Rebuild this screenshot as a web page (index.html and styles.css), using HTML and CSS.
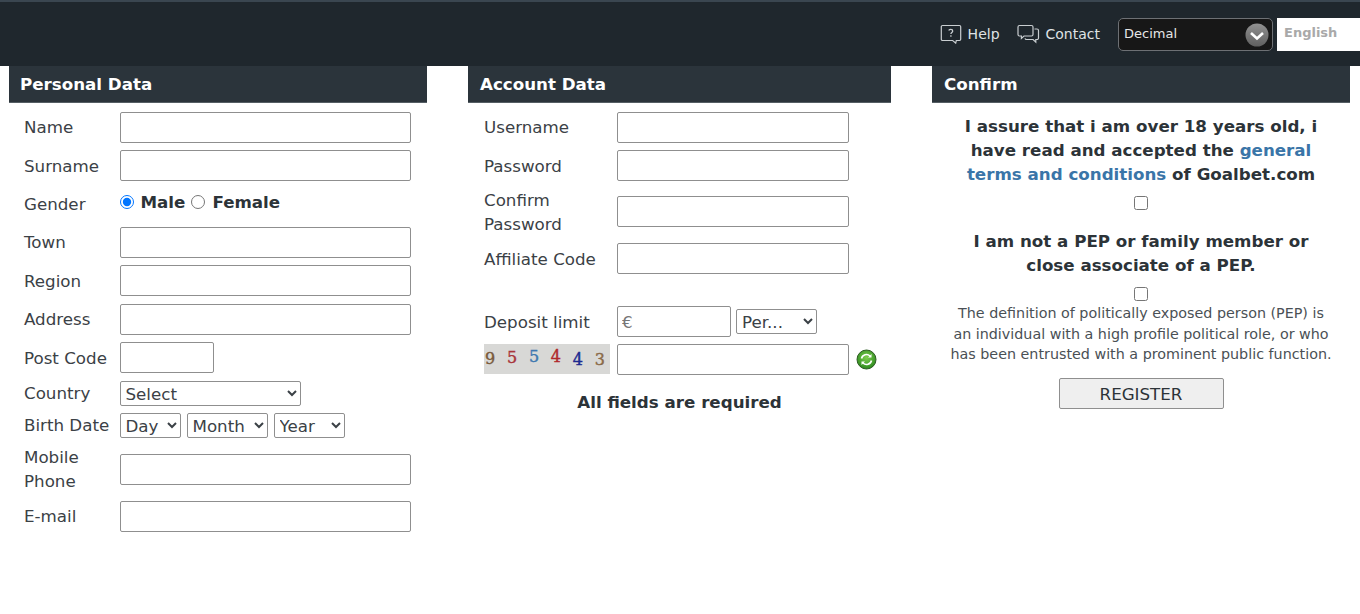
FILE: index.html
```html
<!DOCTYPE html>
<html lang="en">
<head>
<meta charset="utf-8">
<title>Register</title>
<link rel="stylesheet" href="styles.css">
</head>
<body>
<header class="topbar">
  <a class="toplink"><svg class="ico" width="22" height="20" viewBox="0 0 22 20"><path d="M2.5 1.5h17a1.2 1.2 0 0 1 1.2 1.2v12.6a1.2 1.2 0 0 1-1.2 1.2h-3.2l-.6 2.6-3-2.6H2.5a1.2 1.2 0 0 1-1.2-1.2V2.700a1.200 1.200 0 0 1 1.200-1.200z" fill="none" stroke="#c9ced1" stroke-width="1.2"/><path d="M8.800 6.500c.3-1.400 3.900-1.500 3.900.5 0 1.400-1.800 1.400-1.800 2.900M10.900 11.300v1.400" fill="none" stroke="#c9ced1" stroke-width="1.300"/></svg><span>Help</span></a>
  <a class="toplink contact"><svg class="ico" width="23" height="20" viewBox="0 0 23 20"><path d="M2.500 1.500h12a1.500 1.500 0 0 1 1.500 1.500v7.500a1.500 1.500 0 0 1-1.500 1.500H7l-2.600 2.400V12H2.500A1.500 1.500 0 0 1 1 10.500V3a1.500 1.500 0 0 1 1.500-1.500z" fill="none" stroke="#c9ced1" stroke-width="1.200"/><path d="M17.500 5h2.500a1.500 1.500 0 0 1 1.500 1.500V14a1.500 1.500 0 0 1-1.500 1.500h-1.200v2.600l-2.700-2.600H9.500a1.500 1.500 0 0 1-1.500-1.200" fill="none" stroke="#c9ced1" stroke-width="1.200"/></svg><span>Contact</span></a>
  <div class="odds">
    <span class="odds-text">Decimal</span>
    <svg class="odds-arrow" width="24" height="24" viewBox="0 0 24 24"><defs><linearGradient id="g" x1="0" y1="0" x2="0" y2="1"><stop offset="0" stop-color="#919191"/><stop offset="1" stop-color="#5f5f5f"/></linearGradient></defs><circle cx="12" cy="12" r="11.500" fill="url(#g)"/><path d="M6 10l6 5.500 6-5.500" fill="none" stroke="#fff" stroke-width="2.600"/></svg>
  </div>
  <div class="lang">English</div>
</header>

<main class="columns">
  <section class="panel panel-personal">
    <h2 class="panel-title">Personal Data</h2>
    <div class="rows">
      <div class="row"><label class="lbl">Name</label><input class="field" type="text"></div>
      <div class="row"><label class="lbl">Surname</label><input class="field" type="text"></div>
      <div class="row"><label class="lbl">Gender</label>
        <div class="gender"><input class="radio" type="radio" name="g" checked><b>Male</b><input class="radio radio-2" type="radio" name="g"><b>Female</b></div>
      </div>
      <div class="row"><label class="lbl">Town</label><input class="field" type="text"></div>
      <div class="row"><label class="lbl">Region</label><input class="field" type="text"></div>
      <div class="row"><label class="lbl">Address</label><input class="field" type="text"></div>
      <div class="row"><label class="lbl">Post Code</label><input class="field field-post" type="text"></div>
      <div class="row row-country"><label class="lbl">Country</label><select class="sel sel-country"><option>Select</option></select></div>
      <div class="row row-birth"><label class="lbl">Birth Date</label>
        <div class="dates">
          <select class="sel sel-day"><option>Day</option></select>
          <select class="sel sel-month"><option>Month</option></select>
          <select class="sel sel-year"><option>Year</option></select>
        </div>
      </div>
      <div class="row row-mobile"><label class="lbl">Mobile Phone</label><input class="field" type="text"></div>
      <div class="row row-email"><label class="lbl">E-mail</label><input class="field" type="text"></div>
    </div>
  </section>

  <section class="panel panel-account">
    <h2 class="panel-title">Account Data</h2>
    <div class="rows">
      <div class="row"><label class="lbl">Username</label><input class="field" type="text"></div>
      <div class="row"><label class="lbl">Password</label><input class="field" type="text"></div>
      <div class="row row-confirm"><label class="lbl">Confirm Password</label><input class="field" type="text"></div>
      <div class="row row-affiliate"><label class="lbl">Affiliate Code</label><input class="field" type="text"></div>
      <div class="row row-deposit"><label class="lbl">Deposit limit</label>
        <div class="deposit"><input class="field field-euro" type="text" placeholder="€"><select class="sel sel-per"><option>Per...</option></select></div>
      </div>
      <div class="row row-captcha">
        <div class="captcha"><span class="d1">9</span><span class="d2">5</span><span class="d3">5</span><span class="d4">4</span><span class="d5">4</span><span class="d6">3</span></div>
        <input class="field" type="text">
        <svg class="refresh" width="21" height="21" viewBox="0 0 21 21"><defs><radialGradient id="r" cx=".5" cy=".4" r=".6"><stop offset="0" stop-color="#7fce4e"/><stop offset="1" stop-color="#2c8a1e"/></radialGradient></defs><circle cx="10.500" cy="10.500" r="9.500" fill="url(#r)" stroke="#2d5a22"/><path d="M5.500 9.500a5 5 0 0 1 8.500-2.500M15.500 11.500a5 5 0 0 1-8.500 2.500" fill="none" stroke="#fff" stroke-width="1.600"/><path d="M15.500 5v3.500H12zM5.500 16v-3.500H9z" fill="#fff"/></svg>
      </div>
    </div>
    <p class="required">All fields are required</p>
  </section>

  <section class="panel panel-confirm">
    <h2 class="panel-title">Confirm</h2>
    <p class="assure">I assure that i am over 18 years old, i have read and accepted the <a class="terms">general terms and conditions</a> of Goalbet.com</p>
    <input class="check" type="checkbox">
    <p class="assure assure-pep">I am not a PEP or family member or close associate of a PEP.</p>
    <input class="check check-pep" type="checkbox">
    <p class="definition">The definition of politically exposed person (PEP) is an individual with a high profile political role, or who has been entrusted with a prominent public function.</p>
    <button class="register" type="button">REGISTER</button>
  </section>
</main>
</body>
</html>
```
FILE: styles.css
```css
* { box-sizing: border-box; }
html, body { margin: 0; height: 614px; overflow: hidden; }
body { background: #fff; font-family: "DejaVu Sans", Verdana, sans-serif; font-size: 16.700px; color: #343a3f; }

.topbar {
  height: 66px;
  background: #1f272d;
  border-top: 2px solid #3a4650;
  display: flex;
  align-items: center;
  justify-content: flex-end;
  color: #dfe2e4;
  font-size: 14px;
}
.toplink { display: flex; align-items: center; gap: 6px; }
.contact { margin-left: 17px; }
.ico { flex: none; }
.odds {
  width: 155px;
  height: 33px;
  margin-left: 18px;
  padding: 0 3px 0 5px;
  background: #171717;
  border: 1px solid #6d7074;
  border-radius: 5px;
  display: flex;
  align-items: center;
  justify-content: space-between;
  font-size: 13px;
  color: #e6e6e6;
}
.odds-text { margin-top: -2px; }
.odds-arrow { margin-top: 2px; }
.lang {
  width: 83px;
  height: 33px;
  margin-left: 4px;
  padding: 0 0 3px 7px;
  background: #fff;
  display: flex;
  align-items: center;
  font-size: 13px;
  font-weight: bold;
  color: #a9a9a9;
}

.columns { display: flex; padding-left: 9px; gap: 41px; }
.panel { flex: none; }
.panel-personal { width: 418px; }
.panel-account { width: 423px; }
.panel-confirm { width: 418px; text-align: center; }
.panel-title {
  margin: 0;
  height: 37px;
  padding: 0 12px;
  background: #2b343b;
  border-bottom: 1px solid #555e64;
  color: #fff;
  font-size: 16.700px;
  font-weight: bold;
  line-height: 36px;
  text-align: left;
}
.panel-personal .panel-title { padding-left: 11px; }

.rows { padding: 5px 0 0 15px; }
.panel-account .rows { padding-left: 16px; }
.row { height: 38.400px; display: flex; align-items: center; }
.row-country { height: 33px; }
.row-birth { height: 31px; }
.row-mobile { height: 57px; }
.row-email { height: 37px; }
.row-confirm { height: 54px; }
.row-affiliate { height: 40px; }
.row-deposit { height: 44px; margin-top: 21px; }
.row-captcha { height: 32px; }

.lbl { width: 95.500px; flex: none; line-height: 24px; color: #3b4146; }
.panel-account .lbl { width: 133px; }

.field {
  width: 291.500px;
  height: 31px;
  padding: 1px 4px;
  background: #fff;
  border: 1px solid #8f8f8f;
  border-radius: 2px;
  font: inherit;
  color: inherit;
}
.panel-account .field { width: 232px; }
.field-post { width: 94px; }
.panel-account .field-euro { width: 114px; }
.field-euro::placeholder { color: #777; }

.gender { display: flex; align-items: center; margin-top: -3px; color: #2c3338; }
.gender b { font-weight: bold; }
.radio { width: 14px; height: 14px; margin: 0 7px 0 0; }
.radio-2 { margin-left: 6px; }

.sel {
  height: 25px;
  padding: 1px 0 0 1px;
  background: #fff;
  border: 1px solid #8f8f8f;
  border-radius: 2px;
  font: inherit;
  color: #3b4146;
}
.sel-country { width: 181px; }
.dates { display: flex; gap: 6px; }
.sel-day { width: 61px; }
.sel-month { width: 81px; }
.sel-year { width: 71px; }
.deposit { display: flex; align-items: center; gap: 5px; }
.sel-per { width: 81px; }

.captcha {
  width: 126px;
  height: 30px;
  margin: 0 7px 2px 0;
  flex: none;
  padding: 0 5px 0 1px;
  background: #d8d8d6;
  display: flex;
  align-items: center;
  justify-content: space-between;
  font-family: "DejaVu Serif", serif;
  font-size: 16px;
  -webkit-text-stroke: 0.4px currentColor;
}
.d1 { color: #7a5a3c; }
.d2 { color: #a8343a; margin-top: -3px; }
.d3 { color: #3f78b0; margin-top: -4px; }
.d4 { color: #b0282c; margin-top: -4px; }
.d5 { color: #1e2a90; margin-top: 2px; }
.d6 { color: #8a6a48; margin-top: 1px; }
.refresh { margin-left: 7px; flex: none; }

.required { margin: 14px 0 0; text-align: center; font-weight: bold; line-height: 24px; color: #2c3338; }

.assure { margin: 11px 0 0; padding: 0 16px; font-weight: bold; line-height: 24px; color: #2c3338; }
.terms { color: #3a75a8; }
.assure-pep { margin-top: 19px; padding: 0 30px; }
.check { display: block; width: 14px; height: 14px; margin: 10px auto 0; }
.check-pep { margin-top: 10px; }
.definition { margin: 2px 0 0; padding: 0 16px; font-size: 14.300px; line-height: 20.500px; color: #4a5055; }
.register {
  display: block;
  width: 165px;
  height: 31px;
  margin: 13px auto 0;
  padding: 2px 0 0;
  background: #efefef;
  border: 1px solid #8f8f8f;
  border-radius: 2px;
  font: inherit;
  color: #2c3338;
}
```
